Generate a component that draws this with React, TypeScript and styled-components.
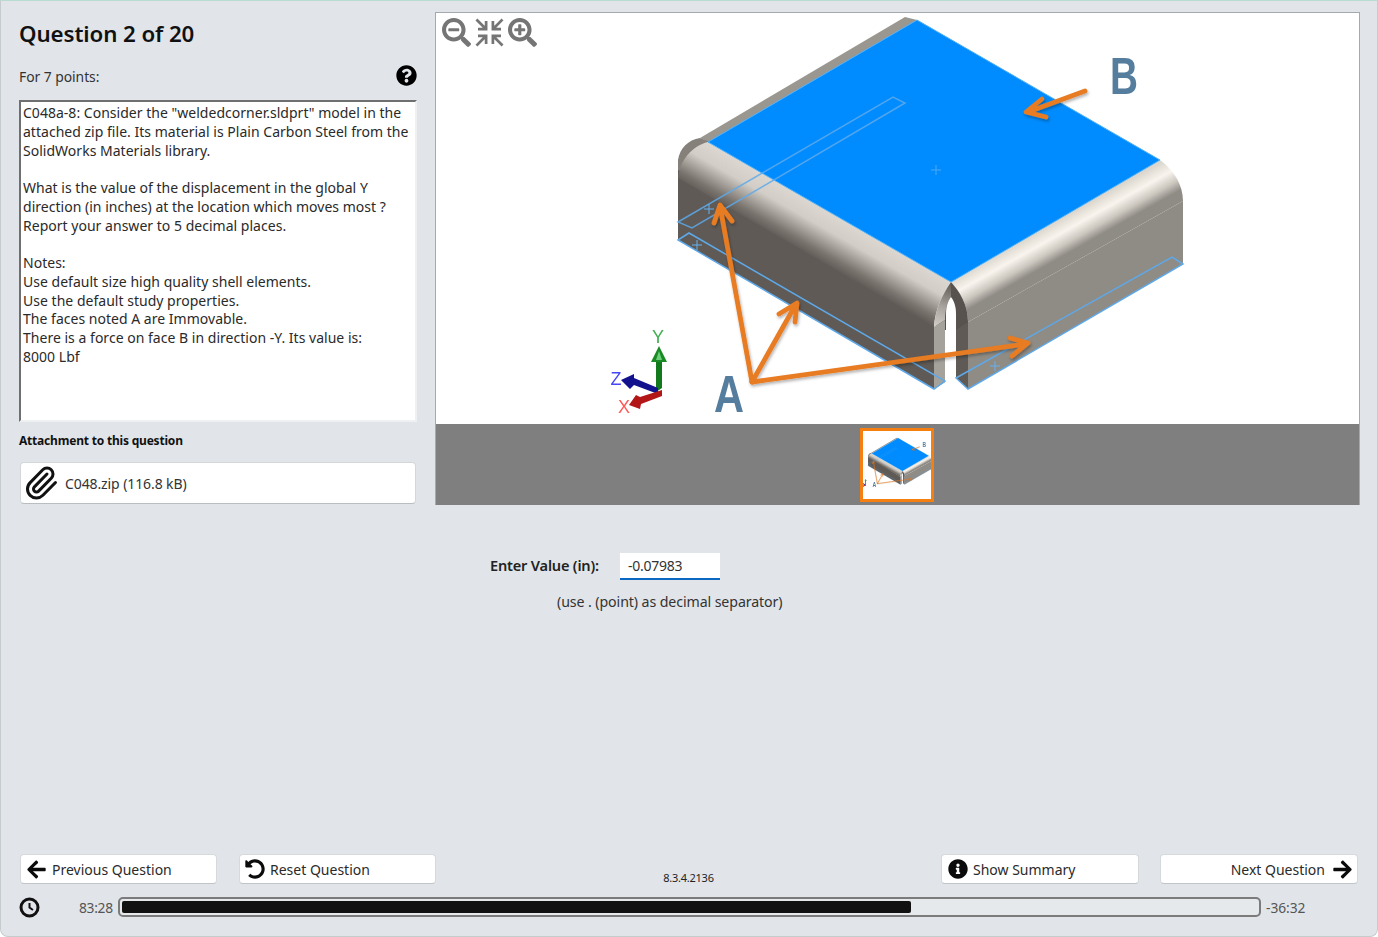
import React from "react";
import styled, { createGlobalStyle } from "styled-components";
import { FaQuestionCircle, FaArrowLeft, FaArrowRight, FaUndoAlt, FaInfoCircle, FaSearchMinus, FaSearchPlus } from "react-icons/fa";
import { Paperclip } from "lucide-react";

const Global = createGlobalStyle`
  html, body { margin: 0; padding: 0; background: #fff; }
  * { box-sizing: border-box; }
`;

const font = `"Noto Sans", "Open Sans", "Liberation Sans", sans-serif`;

const Page = styled.div`
  width: 1378px; height: 937px;
  display: flex; flex-direction: column;
  padding: 11px 18px 0 18px;
  background: #e1e5e9;
  border: 1px solid #c6cbce; border-top-color: #b9dcd2;
  border-radius: 0 0 8px 8px;
  font-family: ${font}; color: #222;
  overflow: hidden;
`;
const Top = styled.div`display: flex; gap: 18px; align-items: flex-start;`;
const Left = styled.div`width: 398px; flex: none; display: flex; flex-direction: column;`;
const Title = styled.h1`
  margin: 7px 0 0; font-size: 22.3px; line-height: 30px; font-weight: 600; color: #111; letter-spacing: -0.1px;
`;
const PointsRow = styled.div`
  display: flex; justify-content: space-between; align-items: center;
  margin-top: 14px; height: 24px; padding-top: 3px; font-size: 13.9px; letter-spacing: -0.05px; color: #333;
  svg { font-size: 21px; color: #000; margin-top: -3px; }
`;
const QuestionBox = styled.div`
  margin-top: 13px; height: 322px; padding: 2px 2px;
  background: #fff; white-space: pre-line;
  border: 2px solid; border-color: #6f6f6f #eef0f2 #eef0f2 #6f6f6f;
  font-size: 14px; line-height: 18.77px; color: #2a2a2a; letter-spacing: 0.02px;
`;
const AttachHead = styled.div`
  margin-top: 9px; height: 20px; font-size: 12px; line-height: 20px; font-weight: 700; color: #111; letter-spacing: -0.2px;
`;
const AttachCard = styled.div`
  margin: 11px 1px 0 1px; height: 42px; display: flex; align-items: center; gap: 6px; padding: 0 2px;
  background: #fff; border: 1px solid #d3d7da; border-bottom-color: #b9bdc0; border-radius: 4px;
  font-size: 14px; letter-spacing: -0.1px; color: #333;
  svg { color: #111; flex: none; }
`;

const Viewer = styled.div`
  width: 925px; height: 493px; flex: none; position: relative;
  display: flex; flex-direction: column;
  border: 1px solid #a5a9ac; border-bottom: none; background: #fff;
`;
const Stage = styled.div`
  height: 411px; background: #fff; svg { display: block; }
`;
const ZoomTools = styled.div`
  position: absolute; left: 6px; top: 5px; display: flex; align-items: center; gap: 4px;
  svg { color: #757575; font-size: 29px; display: block; }
`;
const Strip = styled.div`
  flex: 1; background: #7f7f7f; display: flex; justify-content: center; align-items: center;
`;
const Thumb = styled.div`
  width: 74px; height: 74px; border: 3px solid #f57f10; background: #fff; margin-right: 2px;
  svg { display: block; }
`;

const Answer = styled.div`margin: 48px 0 0 471px; display: flex; flex-direction: column;`;
const AnswerRow = styled.div`display: flex; align-items: center; gap: 20px;`;
const AnswerLabel = styled.label`
  font-size: 14.6px; font-weight: 600; color: #222; letter-spacing: -0.2px; width: 110px; white-space: nowrap;
  padding-bottom: 4px;
`;
const AnswerInput = styled.div`
  width: 100px; height: 27px; padding: 0 8px; background: #fff;
  border-bottom: 2px solid #0a67c2;
  font-size: 14px; line-height: 25px; color: #333; letter-spacing: -0.25px;
`;
const Hint = styled.div`
  margin: 12px 0 0 67px; font-size: 14.2px; line-height: 20px; color: #333; letter-spacing: -0.1px;
`;

const Footer = styled.div`margin-top: auto; display: flex; flex-direction: column; padding-bottom: 19px;`;
const ButtonRow = styled.div`display: flex; justify-content: space-between; padding: 0 1px;`;
const ButtonGroup = styled.div<{ $wide?: boolean }>`
  display: flex; gap: ${(p) => (p.$wide ? "21px" : "22px")};
  button {
    width: ${(p) => (p.$wide ? "198px" : "197px")};
    padding: ${(p) => (p.$wide ? "0 4px 0 6px" : "0 5px")};
  }
`;
const NavButton = styled.button<{ $end?: boolean }>`
  height: 30px; display: flex; align-items: center;
  gap: ${(p) => (p.$end ? "7px" : "5px")};
  justify-content: ${(p) => (p.$end ? "flex-end" : "flex-start")};
  background: #fff; border: 1px solid #d5d9dc; border-bottom-color: #c0c4c7; border-radius: 4px;
  font-family: ${font}; font-size: 14px; color: #2a2a2a;
  svg { color: #0b0b0b; flex: none; }
`;
const Version = styled.div`
  align-self: flex-end; font-size: 11px; line-height: 16px; color: #222; letter-spacing: -0.25px; margin-bottom: -2px;
`;
const TimerRow = styled.div`
  margin-top: 13px; height: 20px; display: flex; align-items: center;
  font-size: 13.8px; color: #555; letter-spacing: -0.3px;
`;
const ClockSlot = styled.div`width: 60px; flex: none; display: flex; svg { color: #111; }`;
const Elapsed = styled.span`width: 39px; flex: none;`;
const Track = styled.div`
  width: 1143px; height: 20px; flex: none; padding: 2px;
  border: 2px solid #7b7b7b; border-radius: 5px; background: #e6e9ec;
`;
const Fill = styled.div`height: 100%; background: #111; border-radius: 2px;`;
const Remaining = styled.span`margin-left: 5px; letter-spacing: -0.05px;`;

const Line = styled.path.attrs({ fill: "none" })`stroke: #5ea9ea; stroke-width: 1.5;`;
const ArrowStroke = styled.path.attrs({ fill: "none" })`
  stroke: #e87b24; stroke-width: 4.8; stroke-linecap: round; stroke-linejoin: round;
`;
const Letter = styled.text`
  font-family: "Liberation Sans", sans-serif; font-weight: 700; font-size: 51px; fill: #557d9e;
`;
const AxisLetter = styled.text`
  font-family: "Liberation Sans", sans-serif; font-size: 18px;
`;
const PlusMark = styled.path.attrs({ fill: "none" })`stroke: #67b0ee; stroke-width: 1;`;

function CompressIcon() {
  const arrow = "M2.5,2.5 L9,9 M11.5,11.5 L4.5,11.5 M11.5,11.5 L11.5,4.5";
  return (
    <svg width="29" height="29" viewBox="0 0 30 30" fill="none" stroke="currentColor" strokeWidth="2.8" strokeLinecap="square">
      <path d={arrow} />
      <path d={arrow} transform="rotate(90 15 15)" />
      <path d={arrow} transform="rotate(180 15 15)" />
      <path d={arrow} transform="rotate(270 15 15)" />
    </svg>
  );
}

function ClockIcon() {
  return (
    <svg width="21" height="21" viewBox="0 0 21 21" fill="none" stroke="currentColor">
      <circle cx="10.5" cy="10.5" r="8.5" strokeWidth="3" />
      <path d="M10.5 6 V10.5 L14 13" strokeWidth="2" />
    </svg>
  );
}

function Scene({ x, y, w, h, width, height, axisLabels }: { x: number; y: number; w: number; h: number; width: number; height: number; axisLabels?: boolean }) {
  return (
    <svg width={width} height={height} viewBox={`${x} ${y} ${w} ${h}`} style={{ filter: "blur(0.45px)" }}>
      <defs>
        <linearGradient id="lband" gradientUnits="userSpaceOnUse" x1="830" y1="212" x2="806" y2="254">
          <stop offset="0" stopColor="#dcd8d1" />
          <stop offset="0.35" stopColor="#d2cec7" />
          <stop offset="0.8" stopColor="#7a756f" />
          <stop offset="1" stopColor="#5f5a55" />
        </linearGradient>
        <linearGradient id="rband" gradientUnits="userSpaceOnUse" x1="1055" y1="222" x2="1071.5" y2="251.3">
          <stop offset="0" stopColor="#dbd7ce" />
          <stop offset="0.38" stopColor="#f9f5ee" />
          <stop offset="0.72" stopColor="#cbc7bf" />
          <stop offset="1" stopColor="#8f8b85" />
        </linearGradient>
        <linearGradient id="arch" gradientUnits="userSpaceOnUse" x1="951" y1="284" x2="938" y2="326">
          <stop offset="0" stopColor="#5f5a55" />
          <stop offset="0.55" stopColor="#a8a49d" />
          <stop offset="1" stopColor="#cfcbc4" />
        </linearGradient>
        <filter id="sh" x="-20%" y="-20%" width="140%" height="140%">
          <feDropShadow dx="1" dy="2" stdDeviation="1.6" floodColor="#000" floodOpacity="0.3" />
        </filter>
      </defs>

      {/* back sliver and rear corner */}
      <polygon points="700,138 905,17 917,20 708,142" fill="#9a9690" />
      <path d="M678,185 L678,160 C680,148 688,140 700,138 L710,142 C695,148 684,160 678,185 Z" fill="#85807a" />

      {/* left wall */}
      <polygon points="678,170 678,240 934,389 945,382 945,315 935,327" fill="#5f5a55" />
      <path d="M708,142 C692,146 680,160 678,178 L934,327 C935,310 942,295 951,282 Z" fill="url(#lband)" />

      {/* right wall */}
      <polygon points="968,322 1183,201 1183,264 968,389" fill="#8f8b85" />
      <polygon points="956,298 968,322 968,389 956,378" fill="#5f5a55" />
      <path d="M951,282 L1160,160 C1174,170 1183,185 1183,201 L968,322 C968,305 960,292 951,282 Z" fill="url(#rband)" />

      {/* slit at the front corner */}
      <path d="M951,282 C960,292 968,305 968,322 L956,330 L945,330 L945,310 Z" fill="#57524e" />
      <path d="M951,282 C942,295 935,310 934,327 L945,320 C945,310 947,302 951,297 Z" fill="url(#arch)" />
      <polygon points="934,327 945,320 945,382 934,389" fill="#a5a19b" />
      <path d="M946,392 L946,314 C946,306 948,301 951,297 C954,301 956,306 956,314 L956,392 Z" fill="#fff" />

      {/* blue face */}
      <polygon points="917,20 1160,160 951,282 708,142" fill="#008cff" stroke="#4fb0f8" strokeWidth="1" />
      <path d="M931,170 H941 M936,165 V175" stroke="#4aa8f5" strokeWidth="1" fill="none" />

      {/* edge outlines */}
      <Line d="M678,222 L893,97 L905,103 L692,228 Z" opacity="0.85" />
      <Line d="M678,240 L689,233 L945,381 L934,389 Z" />
      <Line d="M956,378 L1172,257 L1183,264 L968,389 Z" />
      <PlusMark d="M704,209 H714 M709,204 V214 M692,245 H702 M697,240 V250 M990,366 H1000 M995,361 V371" />

      {/* axis triad */}
      <polygon points="656,362 662,362 662,388 656,392" fill="#127a1c" />
      <polygon points="659,346 651,362 667,362" fill="#1a8a26" />
      <polygon points="659,351 656,360 662,360" fill="#6fd07a" />
      <polygon points="658,388 658,394 634,385 630,389 621,380 634,374 634,378" fill="#12128e" />
      <polygon points="662,390 662,396 641,404 640,409 629,405 636,395 640,397" fill="#b31616" />
      {axisLabels && (
        <>
          <AxisLetter x="658" y="343" textAnchor="middle" fill="#3faf50">Y</AxisLetter>
          <AxisLetter x="616" y="385" textAnchor="middle" fill="#4747f5">Z</AxisLetter>
          <AxisLetter x="624" y="413" textAnchor="middle" fill="#ff5a5a">X</AxisLetter>
        </>
      )}

      {/* callouts */}
      <g filter="url(#sh)">
        <ArrowStroke d="M752,382 L720,206 M714,223 L720,205 L732,221" />
        <ArrowStroke d="M752,382 L796,304 M779,314 L797,303 L795,322" />
        <ArrowStroke d="M752,382 L1026,344 M1010,338 L1028,343 L1012,356" />
        <ArrowStroke d="M1085,91 L1028,112 M1042,99 L1026,112 L1046,117" />
      </g>
      <Letter x="714" y="412" textLength={30} lengthAdjust="spacingAndGlyphs">A</Letter>
      <Letter x="1110" y="94" textLength={28} lengthAdjust="spacingAndGlyphs">B</Letter>
    </svg>
  );
}

const questionText = `C048a-8: Consider the "weldedcorner.sldprt" model in the
attached zip file. Its material is Plain Carbon Steel from the
SolidWorks Materials library.

What is the value of the displacement in the global Y
direction (in inches) at the location which moves most ?
Report your answer to 5 decimal places.

Notes:
Use default size high quality shell elements.
Use the default study properties.
The faces noted A are Immovable.
There is a force on face B in direction -Y. Its value is:
8000 Lbf`;

const elapsedSeconds = 83 * 60 + 28;
const remainingSeconds = 36 * 60 + 32;
const progress = (elapsedSeconds / (elapsedSeconds + remainingSeconds)) * 100;

export default function App() {
  return (
    <>
      <Global />
      <Page>
        <Top>
          <Left>
            <Title>Question 2 of 20</Title>
            <PointsRow>
              <span>For 7 points:</span>
              <FaQuestionCircle />
            </PointsRow>
            <QuestionBox>{questionText}</QuestionBox>
            <AttachHead>Attachment to this question</AttachHead>
            <AttachCard>
              <Paperclip size={36} strokeWidth={2} />
              <span>C048.zip (116.8 kB)</span>
            </AttachCard>
          </Left>
          <Viewer>
            <Stage>
              <Scene x={436} y={13} w={923} h={411} width={923} height={411} axisLabels />
            </Stage>
            <ZoomTools>
              <FaSearchMinus />
              <CompressIcon />
              <FaSearchPlus />
            </ZoomTools>
            <Strip>
              <Thumb>
                <Scene x={638} y={-36} w={540} h={540} width={68} height={68} />
              </Thumb>
            </Strip>
          </Viewer>
        </Top>
        <Answer>
          <AnswerRow>
            <AnswerLabel>Enter Value (in):</AnswerLabel>
            <AnswerInput>-0.07983</AnswerInput>
          </AnswerRow>
          <Hint>(use . (point) as decimal separator)</Hint>
        </Answer>
        <Footer>
          <ButtonRow>
            <ButtonGroup>
              <NavButton><FaArrowLeft size={21} />Previous Question</NavButton>
              <NavButton><FaUndoAlt size={20} />Reset Question</NavButton>
            </ButtonGroup>
            <Version>8.3.4.2136</Version>
            <ButtonGroup $wide>
              <NavButton><FaInfoCircle size={20} />Show Summary</NavButton>
              <NavButton $end>Next Question<FaArrowRight size={21} /></NavButton>
            </ButtonGroup>
          </ButtonRow>
          <TimerRow>
            <ClockSlot><ClockIcon /></ClockSlot>
            <Elapsed>83:28</Elapsed>
            <Track><Fill style={{ width: `${progress}%` }} /></Track>
            <Remaining>-36:32</Remaining>
          </TimerRow>
        </Footer>
      </Page>
    </>
  );
}
